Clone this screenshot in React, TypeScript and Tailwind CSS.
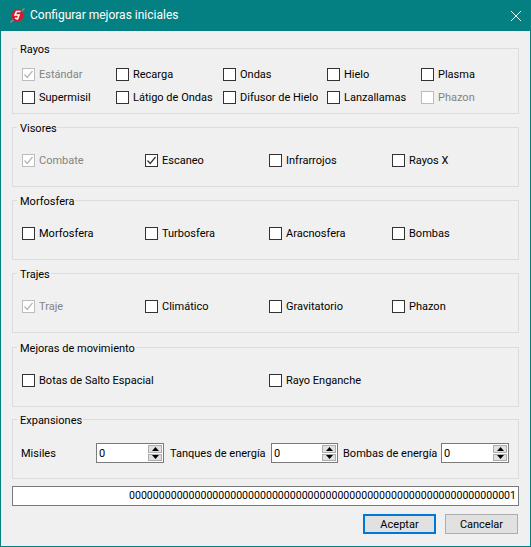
const FONT = "font-['Roboto',sans-serif]"

function Check({ label, checked = false, disabled = false }: { label: string; checked?: boolean; disabled?: boolean }) {
  return (
    <div className={`flex h-[17px] items-center gap-[4px] whitespace-nowrap ${disabled ? 'text-[#838383]' : 'text-black'}`}>
      <div className={`flex h-[13px] w-[13px] shrink-0 items-center justify-center border bg-white ${disabled ? 'border-[#bcbcbc]' : 'border-[#333]'}`}>
        {checked && (
          <svg width="11" height="11" viewBox="0 0 11 11" fill="none">
            <path d="M1.5 5.5 L4.2 8.5 L9.5 2" stroke={disabled ? '#b5b5b5' : '#333'} strokeWidth="1.2" />
          </svg>
        )}
      </div>
      <span>{label}</span>
    </div>
  )
}

function Group({ title, className, children }: { title: string; className: string; children: React.ReactNode }) {
  return (
    <fieldset className={`mx-[11px] shrink-0 border border-[#dcdcdc] px-[9px] ${className}`}>
      <legend className="-ml-[5px] h-[14px] pl-[3px] pr-[1px] text-[11px] leading-[18px]">{title}</legend>
      {children}
    </fieldset>
  )
}

function Spin({ className }: { className: string }) {
  return (
    <div className={`flex h-[20px] shrink-0 items-center justify-between border border-[#7a7a7a] bg-white pl-[2px] pr-[1px] ${className}`}>
      <span>0</span>
      <div className="flex h-[16px] w-[14px] flex-col gap-px">
        <div className="flex flex-1 items-center justify-center border border-[#adadad] bg-[#e1e1e1]">
          <svg width="7" height="4" viewBox="0 0 7 4"><path d="M3.5 0 L7 4 H0 Z" fill="#000" /></svg>
        </div>
        <div className="flex flex-1 items-center justify-center border border-[#adadad] bg-[#e1e1e1]">
          <svg width="7" height="4" viewBox="0 0 7 4"><path d="M0 0 H7 L3.5 4 Z" fill="#000" /></svg>
        </div>
      </div>
    </div>
  )
}

export default function App() {
  return (
    <div className={`flex h-[547px] w-[531px] flex-col overflow-hidden border border-t-0 border-[#058082] bg-[#f0f0f0] text-[11px] leading-[17px] text-black ${FONT}`}>
      <header className="-mx-px flex h-[31px] shrink-0 items-center bg-[#058082] pl-[10px] pr-[10px] text-white">
        <svg width="15" height="15" viewBox="0 0 15 15" className="shrink-0">
          <path d="M0.5 14.5 L4 11 M14.5 0.5 L11 4" stroke="#8a8a8a" strokeWidth="1.5" />
          <circle cx="7.5" cy="7.5" r="6" fill="#d8182c" />
          <path d="M10.5 3.5 H6.5 L5 7 H9 L7.5 11 L5 10" fill="none" stroke="#fff" strokeWidth="1.6" />
        </svg>
        <span className="ml-[5px] text-[12px]">Configurar mejoras iniciales</span>
        <svg width="10" height="10" viewBox="0 0 10 10" className="ml-auto" fill="none">
          <path d="M0 0 L10 10 M10 0 L0 10" stroke="#fff" strokeWidth="1" />
        </svg>
      </header>

      <Group title="Rayos" className="mt-[10px] h-[73px]">
        <div className="grid grid-cols-[94px_107px_104px_94px_1fr] gap-y-[6px] pt-[11px]">
          <Check label="Estándar" checked disabled />
          <Check label="Recarga" />
          <Check label="Ondas" />
          <Check label="Hielo" />
          <Check label="Plasma" />
          <Check label="Supermisil" />
          <Check label="Látigo de Ondas" />
          <Check label="Difusor de Hielo" />
          <Check label="Lanzallamas" />
          <Check label="Phazon" disabled />
        </div>
      </Group>

      <Group title="Visores" className="mt-[6px] h-[67px]">
        <div className="grid grid-cols-[123px_124px_123px_1fr] pt-[18px]">
          <Check label="Combate" checked disabled />
          <Check label="Escaneo" checked />
          <Check label="Infrarrojos" />
          <Check label="Rayos X" />
        </div>
      </Group>

      <Group title="Morfosfera" className="mt-[6px] h-[67px]">
        <div className="grid grid-cols-[123px_124px_123px_1fr] pt-[18px]">
          <Check label="Morfosfera" />
          <Check label="Turbosfera" />
          <Check label="Aracnosfera" />
          <Check label="Bombas" />
        </div>
      </Group>

      <Group title="Trajes" className="mt-[6px] h-[67px]">
        <div className="grid grid-cols-[123px_124px_123px_1fr] pt-[18px]">
          <Check label="Traje" checked disabled />
          <Check label="Climático" />
          <Check label="Gravitatorio" />
          <Check label="Phazon" />
        </div>
      </Group>

      <Group title="Mejoras de movimiento" className="mt-[7px] h-[67px]">
        <div className="grid grid-cols-[247px_1fr] pt-[18px]">
          <Check label="Botas de Salto Espacial" />
          <Check label="Rayo Enganche" />
        </div>
      </Group>

      <Group title="Expansiones" className="mt-[5px] h-[67px]">
        <div className="-ml-px flex items-center whitespace-nowrap pt-[17px]">
          <span className="w-[75px]">Misiles</span>
          <Spin className="w-[68px]" />
          <span className="ml-[6px] w-[101px]">Tanques de energía</span>
          <Spin className="w-[67px]" />
          <span className="ml-[5px] w-[98px]">Bombas de energía</span>
          <Spin className="w-[68px]" />
        </div>
      </Group>

      <div className="mx-[11px] mt-[7px] h-[20px] shrink-0 overflow-hidden border border-[#7a7a7a] bg-white pr-[2px] text-right text-[10.6px] leading-[18px]">
        00000000000000000000000000000000000000000000000000000000000000001
      </div>

      <div className="mr-[12px] mt-[8px] flex justify-end gap-[9px]">
        <button className="h-[20px] w-[73px] border-2 border-[#0078d7] bg-[#e1e1e1] leading-none">Aceptar</button>
        <button className="h-[20px] w-[73px] border border-[#adadad] bg-[#e1e1e1] leading-none">Cancelar</button>
      </div>
    </div>
  )
}
